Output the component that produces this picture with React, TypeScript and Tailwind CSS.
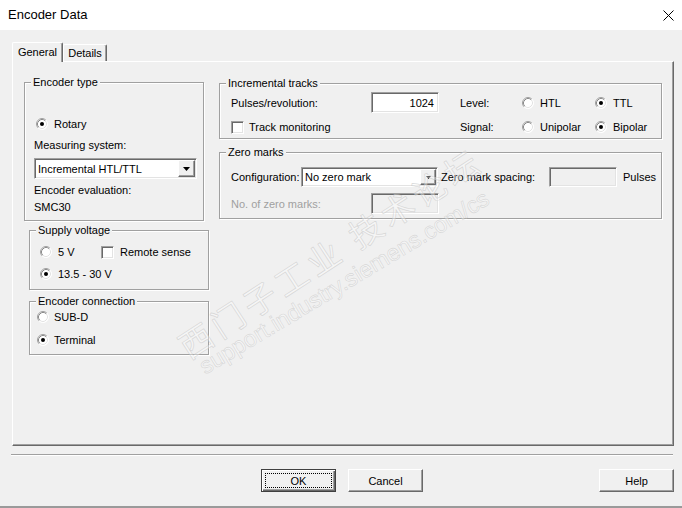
import type { ReactNode } from "react";

const raised =
  "border border-t-white border-l-white border-r-[#696969] border-b-[#696969] shadow-[inset_-1px_-1px_0_#a0a0a0] bg-[#f0f0f0]";
const sunken =
  "border border-t-[#a0a0a0] border-l-[#a0a0a0] border-r-white border-b-white shadow-[inset_1px_1px_0_#696969,inset_-1px_-1px_0_#e3e3e3]";

function Radio({ checked }: { checked?: boolean }) {
  return (
    <svg width="12" height="12" viewBox="0 0 12 12" className="shrink-0">
      <circle cx="6" cy="6" r="5.5" fill="#fff" />
      <path d="M2.11 9.89 A5.5 5.5 0 0 1 9.89 2.11" fill="none" stroke="#a0a0a0" />
      <path d="M9.89 2.11 A5.5 5.5 0 0 1 2.11 9.89" fill="none" stroke="#fff" />
      <path d="M2.82 9.18 A4.5 4.5 0 0 1 9.18 2.82" fill="none" stroke="#8a8a8a" />
      <path d="M9.18 2.82 A4.5 4.5 0 0 1 2.82 9.18" fill="none" stroke="#e3e3e3" />
      {checked && <circle cx="6" cy="6" r="2" fill="#000" />}
    </svg>
  );
}

function Checkbox() {
  return <div className={`h-[13px] w-[13px] shrink-0 bg-white ${sunken}`} />;
}

function Group({
  title,
  className,
  children,
}: {
  title: string;
  className: string;
  children: ReactNode;
}) {
  return (
    <div
      className={`relative border border-[#a0a0a0] shadow-[1px_1px_0_#fff,inset_1px_1px_0_#fff] ${className}`}
    >
      <span className="absolute -top-[8px] left-[6px] bg-[#f0f0f0] px-[2px] leading-[14px]">
        {title}
      </span>
      {children}
    </div>
  );
}

function Arrow({ small }: { small?: boolean }) {
  return small ? (
    <svg width="5" height="3" viewBox="0 0 5 3">
      <polygon points="0,0 5,0 2.5,3" fill="#000" />
    </svg>
  ) : (
    <svg width="7" height="4" viewBox="0 0 7 4">
      <polygon points="0,0 7,0 3.5,4" fill="#000" />
    </svg>
  );
}

function Combo({
  value,
  className,
  small,
}: {
  value: string;
  className: string;
  small?: boolean;
}) {
  return (
    <div className={`flex bg-white p-[1px] ${sunken} ${className}`}>
      <div className="flex flex-1 items-center pl-[2px]">{value}</div>
      <div
        className={`flex items-center justify-center ${raised} ${small ? "w-[16px]" : "w-[17px]"}`}
      >
        <Arrow small={small} />
      </div>
    </div>
  );
}

function Row({ className, children }: { className?: string; children: ReactNode }) {
  return <div className={`flex h-[14px] items-center ${className ?? ""}`}>{children}</div>;
}

export default function App() {
  return (
    <div className="relative flex h-[508px] w-[682px] flex-col overflow-hidden border-b-2 border-[#9a9a9a] bg-[#f0f0f0] font-['Liberation_Sans',Arial,sans-serif] text-[11px] leading-[14px] text-black">
      {/* title bar */}
      <div className="flex h-[30px] shrink-0 items-center justify-between bg-white pl-[8px] pr-[8px]">
        <span className="text-[13px] leading-[16px]">Encoder Data</span>
        <svg width="11" height="11" viewBox="0 0 11 11">
          <path d="M0.5 0.5 L10.5 10.5 M10.5 0.5 L0.5 10.5" stroke="#000" strokeWidth="1" />
        </svg>
      </div>

      {/* tabs */}
      <div className="mt-[12px] flex h-[19px] items-end pl-[12px]">
        <div className="relative z-10 -mb-[1px] flex h-[20px] w-[51px] items-center justify-center rounded-t-[2px] border border-b-0 border-t-white border-l-white border-r-[#696969] bg-[#f0f0f0] pb-[1px] shadow-[inset_-1px_0_0_#a0a0a0]">
          General
        </div>
        <div className="flex h-[17px] w-[44px] items-center justify-center rounded-t-[2px] border border-b-0 border-t-white border-l-white border-r-[#696969] shadow-[inset_-1px_0_0_#a0a0a0]">
          Details
        </div>
      </div>

      {/* panel */}
      <div className={`ml-[12px] flex h-[385px] w-[662px] ${raised}`}>
        {/* left column */}
        <div className="ml-[11px] flex w-[185px] flex-col">
          <Group title="Encoder type" className="mt-[20px] h-[139px] w-[180px]">
            <div className="flex flex-col pl-[9px]">
              <Row className="mt-[34px] ml-[2px] gap-[6px]">
                <Radio checked />
                <span>Rotary</span>
              </Row>
              <Row className="mt-[7px]">Measuring system:</Row>
              <Combo value="Incremental HTL/TTL" className="mt-[6px] h-[21px] w-[163px]" />
              <Row className="mt-[4px]">Encoder evaluation:</Row>
              <Row className="mt-[3px]">SMC30</Row>
            </div>
          </Group>

          <Group title="Supply voltage" className="mt-[9px] ml-[5px] h-[60px] w-[180px]">
            <div className="flex flex-col pl-[10px]">
              <Row className="mt-[14px]">
                <div className="flex w-[61px] items-center gap-[6px]">
                  <Radio />
                  <span>5 V</span>
                </div>
                <div className="flex items-center gap-[6px]">
                  <Checkbox />
                  <span>Remote sense</span>
                </div>
              </Row>
              <Row className="mt-[8px] gap-[6px]">
                <Radio checked />
                <span>13.5 - 30 V</span>
              </Row>
            </div>
          </Group>

          <Group title="Encoder connection" className="mt-[11px] ml-[5px] h-[54px] w-[180px]">
            <div className="flex flex-col pl-[7px]">
              <Row className="mt-[8px] gap-[5px]">
                <Radio />
                <span>SUB-D</span>
              </Row>
              <Row className="mt-[9px] gap-[5px]">
                <Radio checked />
                <span>Terminal</span>
              </Row>
            </div>
          </Group>
        </div>

        {/* right column */}
        <div className="ml-[10px] flex w-[443px] flex-col">
          <Group title="Incremental tracks" className="mt-[21px] h-[56px] w-[443px]">
            <div className="flex flex-col pl-[11px]">
              <div className="mt-[8px] flex h-[21px] items-center">
                <span className="w-[140px]">Pulses/revolution:</span>
                <div className={`flex h-[21px] w-[68px] items-center justify-end bg-white pr-[4px] ${sunken}`}>
                  1024
                </div>
                <span className="ml-[21px] w-[62px]">Level:</span>
                <div className="flex w-[73px] items-center gap-[6px]">
                  <Radio />
                  <span>HTL</span>
                </div>
                <div className="flex items-center gap-[6px]">
                  <Radio checked />
                  <span>TTL</span>
                </div>
              </div>
              <Row className="mt-[7px]">
                <div className="flex w-[229px] items-center gap-[5px]">
                  <Checkbox />
                  <span>Track monitoring</span>
                </div>
                <span className="w-[62px]">Signal:</span>
                <div className="flex w-[73px] items-center gap-[6px]">
                  <Radio />
                  <span>Unipolar</span>
                </div>
                <div className="flex items-center gap-[6px]">
                  <Radio checked />
                  <span>Bipolar</span>
                </div>
              </Row>
            </div>
          </Group>

          <Group title="Zero marks" className="mt-[13px] h-[67px] w-[443px]">
            <div className="flex flex-col pl-[11px]">
              <div className="mt-[14px] flex h-[20px] items-center">
                <span className="w-[70px]">Configuration:</span>
                <Combo value="No zero mark" small className="h-[20px] w-[137px]" />
                <span className="ml-[3px] w-[108px]">Zero mark spacing:</span>
                <div className={`h-[20px] w-[68px] bg-[#f0f0f0] ${sunken}`} />
                <span className="ml-[6px]">Pulses</span>
              </div>
              <div className="mt-[6px] flex h-[21px] items-center">
                <span className="w-[140px] text-[#a0a0a0]">No. of zero marks:</span>
                <div className={`h-[21px] w-[68px] bg-[#f0f0f0] ${sunken}`} />
              </div>
            </div>
          </Group>
        </div>
      </div>

      {/* separator */}
      <div className="mt-[8px] ml-[11px] h-[2px] w-[662px] border-t border-b border-t-[#a0a0a0] border-b-white" />

      {/* buttons */}
      <div className="mt-[13px] flex h-[23px]">
        <div className="ml-[261px] h-[23px] w-[75px] border border-[#404040]">
          <div className="flex h-full w-full p-[3px] shadow-[inset_1px_1px_0_#fff,inset_-1px_-1px_0_#696969,inset_-2px_-2px_0_#a0a0a0]">
            <div className="flex flex-1 items-center justify-center border border-dotted border-black">
              OK
            </div>
          </div>
        </div>
        <div className={`ml-[12px] flex h-[23px] w-[75px] items-center justify-center ${raised}`}>
          Cancel
        </div>
        <div className={`ml-[176px] flex h-[23px] w-[75px] items-center justify-center ${raised}`}>
          Help
        </div>
      </div>

      {/* forum watermark */}
      <div className="pointer-events-none absolute left-[330px] top-[252px] -translate-x-1/2 -translate-y-1/2 -rotate-[33deg] whitespace-nowrap font-['Noto_Sans_CJK_SC',sans-serif] text-[33px] leading-[38px] tracking-[5px] text-white/40 [-webkit-text-stroke:0.7px_rgba(190,190,190,0.55)]">
        西门子工业 技术论坛
      </div>
      <div className="pointer-events-none absolute left-[344px] top-[282px] -translate-x-1/2 -translate-y-1/2 -rotate-[31deg] whitespace-nowrap font-['Liberation_Sans',Arial,sans-serif] text-[23px] leading-[26px] text-white/40 [-webkit-text-stroke:0.6px_rgba(190,190,190,0.55)]">
        support.industry.siemens.com/cs
      </div>
    </div>
  );
}
